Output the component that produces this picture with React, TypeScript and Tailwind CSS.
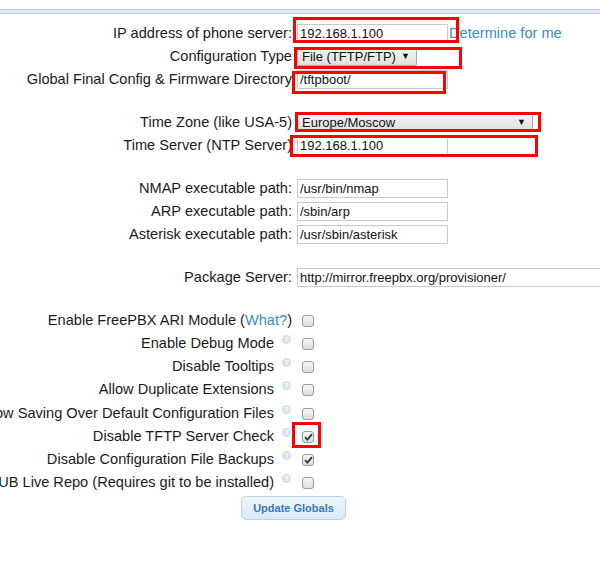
import React from "react";

function TextInput({ value, width = "w-[151px]" }: { value: string; width?: string }) {
  return (
    <div
      className={`${width} h-[19px] shrink-0 border border-[#c9c9c9] bg-white px-[2px] text-[13px] leading-[17px] text-[#111] whitespace-nowrap overflow-hidden`}
    >
      {value}
    </div>
  );
}

function Select({ value, width }: { value: string; width: string }) {
  return (
    <div
      className={`${width} h-[19px] shrink-0 flex items-center justify-between border border-[#a9a9a9] rounded-[2px] bg-gradient-to-b from-[#f6f6f6] to-[#dedede] pl-[4px] pr-[6px] text-[13px] text-[#111]`}
    >
      <span className="whitespace-nowrap">{value}</span>
      <span className="text-[9px] leading-none">▼</span>
    </div>
  );
}

function Checkbox({ checked = false }: { checked?: boolean }) {
  return (
    <span className="relative w-[12px] h-[12px] shrink-0 rounded-[3px] border border-[#9b9b9b] bg-gradient-to-b from-[#f7f7f7] to-[#dcdcdc] flex items-center justify-center">
      {checked && (
        <svg width="9" height="8" viewBox="0 0 9 8">
          <path d="M1 4.2 L3.4 6.6 L8 1.2" stroke="#3b3b3b" strokeWidth="1.9" fill="none" />
        </svg>
      )}
    </span>
  );
}

function Help() {
  return (
    <span className="ml-[8px] mb-[9px] w-[9px] h-[9px] shrink-0 rounded-full bg-[#cfe2f3] text-white text-[8px] leading-[9px] font-bold flex items-center justify-center">
      ?
    </span>
  );
}

function FormRow({ label, children }: { label: string; children: React.ReactNode }) {
  return (
    <div className="flex items-center h-[23px]">
      <div className="w-[292px] shrink-0 flex justify-end whitespace-nowrap">{label}</div>
      <div className="ml-[5px] flex items-center">{children}</div>
    </div>
  );
}

function CheckRow({ label, checked }: { label: string; checked?: boolean }) {
  return (
    <div className="flex items-center h-[23.3px]">
      <div className="w-[291px] shrink-0 flex justify-end items-center whitespace-nowrap">
        <span className="shrink-0">{label}</span>
        <Help />
      </div>
      <div className="ml-[11px] flex items-center">
        <Checkbox checked={checked} />
      </div>
    </div>
  );
}

function RedBox({ cls }: { cls: string }) {
  return <div className={`absolute border-[3px] border-[#ff0000] pointer-events-none ${cls}`} />;
}

export default function App() {
  return (
    <div
      className="relative w-[600px] h-[566px] overflow-hidden bg-white text-[14.6px] text-[#1a1a1a]"
      style={{ fontFamily: '"Liberation Sans", Arial, sans-serif' }}
    >
      <div className="mt-[9px] h-[5px] border-y border-[#b6cbdc] bg-[#dde9f6]" />

      <div className="pt-[8px]">
        <FormRow label="IP address of phone server:">
          <TextInput value="192.168.1.100" />
          <a className="ml-[1px] text-[#3a8cc6] whitespace-nowrap">Determine for me</a>
        </FormRow>
        <FormRow label="Configuration Type">
          <Select value="File (TFTP/FTP)" width="w-[120px]" />
        </FormRow>
        <FormRow label="Global Final Config & Firmware Directory">
          <TextInput value="/tftpboot/" />
        </FormRow>

        <div className="h-[20px]" />
        <FormRow label="Time Zone (like USA-5)">
          <Select value="Europe/Moscow" width="w-[236px]" />
        </FormRow>
        <FormRow label="Time Server (NTP Server)">
          <TextInput value="192.168.1.100" />
        </FormRow>

        <div className="h-[20px]" />
        <FormRow label="NMAP executable path:">
          <TextInput value="/usr/bin/nmap" />
        </FormRow>
        <FormRow label="ARP executable path:">
          <TextInput value="/sbin/arp" />
        </FormRow>
        <FormRow label="Asterisk executable path:">
          <TextInput value="/usr/sbin/asterisk" />
        </FormRow>

        <div className="h-[20px]" />
        <FormRow label="Package Server:">
          <TextInput value="http://mirror.freepbx.org/provisioner/" width="w-[330px]" />
        </FormRow>

        <div className="h-[20px]" />
        <div className="flex items-center h-[23px]">
          <div className="w-[292px] shrink-0 flex justify-end whitespace-nowrap">
            <span className="shrink-0">
              Enable FreePBX ARI Module (<a className="text-[#3a8cc6]">What?</a>)
            </span>
          </div>
          <div className="ml-[10px] flex items-center">
            <Checkbox />
          </div>
        </div>
        <CheckRow label="Enable Debug Mode" />
        <CheckRow label="Disable Tooltips" />
        <CheckRow label="Allow Duplicate Extensions" />
        <CheckRow label="Allow Saving Over Default Configuration Files" />
        <CheckRow label="Disable TFTP Server Check" checked />
        <CheckRow label="Disable Configuration File Backups" checked />
        <CheckRow label="Use GITHUB Live Repo (Requires git to be installed)" />

        <div className="flex mt-[1px]">
          <button className="ml-[241px] w-[105px] h-[24px] rounded-[5px] border border-[#b9d5ee] bg-gradient-to-b from-[#f0f7fe] to-[#d8e9f8] text-[11px] font-bold text-[#3a78b0]">
            Update Globals
          </button>
        </div>
      </div>

      <RedBox cls="left-[293px] top-[17px] w-[166px] h-[26px]" />
      <RedBox cls="left-[294px] top-[47px] w-[168px] h-[22px]" />
      <RedBox cls="left-[292px] top-[71px] w-[154px] h-[23px]" />
      <RedBox cls="left-[295px] top-[112px] w-[246px] h-[20px]" />
      <RedBox cls="left-[290px] top-[135px] w-[248px] h-[22px]" />
      <RedBox cls="left-[292px] top-[422px] w-[29px] h-[26px]" />
    </div>
  );
}
